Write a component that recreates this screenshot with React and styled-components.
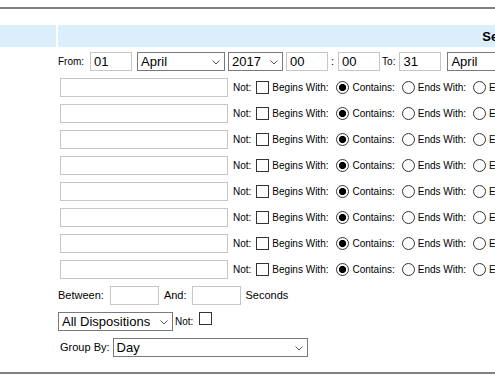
import React from "react";
import styled, { createGlobalStyle } from "styled-components";

const GlobalStyle = createGlobalStyle`
  html, body {
    margin: 0;
    padding: 0;
    background: #fff;
    overflow: hidden;
  }
  body {
    font-family: "Liberation Sans", Arial, sans-serif;
    color: #000;
  }
`;

const Page = styled.div`
  padding-top: 7px;
  width: 100%;
  overflow: hidden;
`;

const Rule = styled.div`
  height: 2px;
  background: #808080;
  margin-top: ${(p) => p.$mt || 0}px;
`;

const HeaderRow = styled.div`
  display: grid;
  grid-template-columns: 56px 892px;
  column-gap: 2px;
  margin-top: 16px;
  height: 22px;
`;

const HeaderCell = styled.div`
  background: #daeefc;
  display: flex;
  align-items: center;
  justify-content: center;
  font-size: 13px;
  font-weight: bold;
  white-space: nowrap;
`;

const Form = styled.div`
  margin: 5px 0 0 58px;
  display: flex;
  flex-direction: column;
  gap: 7px;
`;

const Row = styled.div`
  display: flex;
  align-items: center;
  height: 19px;
  white-space: nowrap;
`;

const Label = styled.span`
  flex: none;
  font-size: ${(p) => p.$size || 10}px;
  margin-left: ${(p) => p.$ml || 0}px;
  line-height: 1;
`;

const Colon = styled.span`
  flex: none;
  width: 7px;
  margin-left: 3px;
  font-size: 11px;
  line-height: 1;
`;

const TextInput = styled.input`
  flex: none;
  box-sizing: border-box;
  width: ${(p) => p.$w}px;
  height: 19px;
  margin: 0 0 0 ${(p) => p.$ml || 0}px;
  border: 1px solid #c6c6c6;
  padding: 0 3px;
  font: 13px "Liberation Sans", Arial, sans-serif;
  color: #000;
  background: #fff;
  outline: none;
`;

const SelectBox = styled.div`
  flex: none;
  box-sizing: border-box;
  width: ${(p) => p.$w}px;
  height: 19px;
  margin-left: ${(p) => p.$ml || 0}px;
  border: 1px solid #7a7a7a;
  background: #fff;
  display: flex;
  align-items: center;
  padding: 0 4px 0 3px;
  font-size: 13px;
`;

const SelectText = styled.span`
  flex: 1;
  line-height: 1;
`;

const Chevron = styled.svg`
  flex: none;
  width: 8px;
  height: 5px;
  margin-top: 2px;
`;

const Checkbox = styled.input.attrs({ type: "checkbox" })`
  flex: none;
  appearance: none;
  -webkit-appearance: none;
  box-sizing: border-box;
  width: 13px;
  height: 13px;
  margin: 0 0 0 ${(p) => p.$ml || 0}px;
  border: 1px solid #333;
  background: #fff;
  align-self: ${(p) => (p.$top ? "flex-start" : "center")};
`;

const Radio = styled.input.attrs({ type: "radio" })`
  flex: none;
  appearance: none;
  -webkit-appearance: none;
  box-sizing: border-box;
  width: 13px;
  height: 13px;
  margin: 0 0 0 ${(p) => p.$ml || 0}px;
  border: 1px solid #333;
  border-radius: 50%;
  background: #fff;
  &:checked {
    background: radial-gradient(circle, #000 0 3.3px, #fff 3.9px);
  }
`;

function Select({ w, ml, children }) {
  return (
    <SelectBox $w={w} $ml={ml}>
      <SelectText>{children}</SelectText>
      <Chevron viewBox="0 0 8 5">
        <polyline points="0.5,0.5 4,4 7.5,0.5" fill="none" stroke="#555" strokeWidth="1" />
      </Chevron>
    </SelectBox>
  );
}

function MatchRow({ i }) {
  const name = `match${i}`;
  return (
    <Row>
      <TextInput $w={168} $ml={2} defaultValue="" />
      <Label $ml={5}>Not:</Label>
      <Checkbox $ml={5} />
      <Label $ml={3}>Begins With:</Label>
      <Radio $ml={8} name={name} defaultChecked />
      <Label $ml={3}>Contains:</Label>
      <Radio $ml={7} name={name} />
      <Label $ml={3}>Ends With:</Label>
      <Radio $ml={7} name={name} />
      <Label $ml={3}>Exact:</Label>
      <Radio $ml={7} name={name} />
    </Row>
  );
}

export default function App() {
  return (
    <>
      <GlobalStyle />
      <Page>
        <Rule />
        <HeaderRow>
          <HeaderCell />
          <HeaderCell>Search</HeaderCell>
        </HeaderRow>
        <Form>
          <Row>
            <Label>From:</Label>
            <TextInput $w={42} $ml={6} defaultValue="01" />
            <Select w={88} ml={5}>April</Select>
            <Select w={55} ml={3}>2017</Select>
            <TextInput $w={42} $ml={3} defaultValue="00" />
            <Colon>:</Colon>
            <TextInput $w={42} defaultValue="00" />
            <Label $ml={2}>To:</Label>
            <TextInput $w={42} $ml={4} defaultValue="31" />
            <Select w={88} ml={6}>April</Select>
            <Select w={55} ml={3}>2017</Select>
          </Row>
          {[0, 1, 2, 3, 4, 5, 6, 7].map((i) => (
            <MatchRow key={i} i={i} />
          ))}
          <Row>
            <Label $size={11}>Between:</Label>
            <TextInput $w={49} $ml={6} defaultValue="" />
            <Label $size={11} $ml={5}>And:</Label>
            <TextInput $w={49} $ml={5} defaultValue="" />
            <Label $size={11} $ml={5}>Seconds</Label>
          </Row>
          <Row>
            <Select w={115}>All Dispositions</Select>
            <Label $ml={2}>Not:</Label>
            <Checkbox $ml={6} $top />
          </Row>
          <Row>
            <Label $size={11} $ml={2}>Group By:</Label>
            <Select w={195} ml={3}>Day</Select>
          </Row>
        </Form>
        <Rule $mt={15} />
      </Page>
    </>
  );
}
